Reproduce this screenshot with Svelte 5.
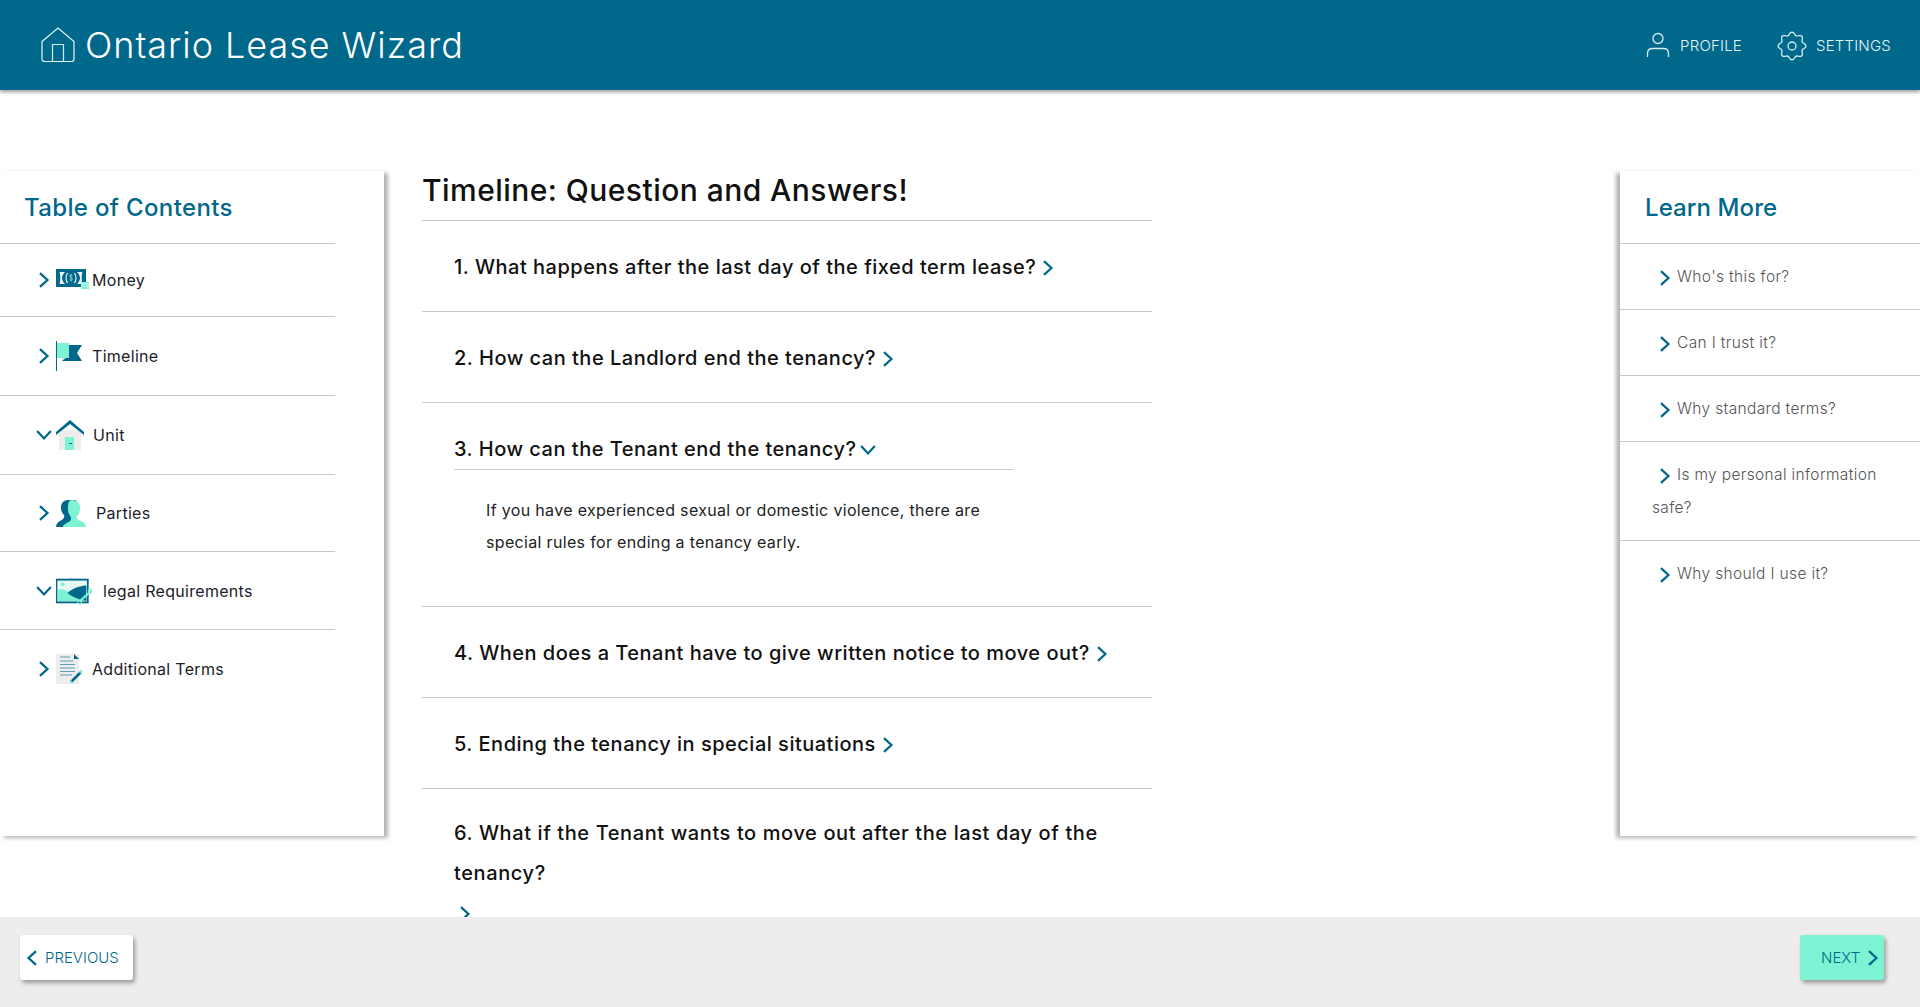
<script>
  const toc = [
    { label: 'Money', icon: 'money', open: false, h: 73, gap: 0 },
    { label: 'Timeline', icon: 'flag', open: false, h: 79, gap: 0 },
    { label: 'Unit', icon: 'home', open: true, h: 79, gap: 1 },
    { label: 'Parties', icon: 'people', open: false, h: 77, gap: 4 },
    { label: 'legal Requirements', icon: 'picture', open: true, h: 78, gap: 11 },
    { label: 'Additional Terms', icon: 'doc', open: false, h: 78, gap: 0 }
  ];

  const questions = [
    { text: '1. What happens after the last day of the fixed term lease?' },
    { text: '2. How can the Landlord end the tenancy?' },
    {
      text: '3. How can the Tenant end the tenancy?',
      open: true,
      answer: 'If you have experienced sexual or domestic violence, there are special rules for ending a tenancy early.'
    },
    { text: '4. When does a Tenant have to give written notice to move out?' },
    { text: '5. Ending the tenancy in special situations' },
    { text: '6. What if the Tenant wants to move out after the last day of the tenancy?', wrap: true }
  ];

  const learn = [
    "Who's this for?",
    'Can I trust it?',
    'Why standard terms?',
    'Is my personal information safe?',
    'Why should I use it?'
  ];

  // wavy 8-lobed outline for the settings gear
  const gearPath = Array.from({ length: 97 }, (_, i) => {
    const a = (i / 96) * Math.PI * 2;
    const r = 12.4 + 1.5 * Math.cos(a * 8);
    const x = (15 + r * Math.sin(a)).toFixed(2);
    const y = (15 - r * Math.cos(a)).toFixed(2);
    return `${i ? 'L' : 'M'}${x} ${y}`;
  }).join(' ');
</script>

{#snippet chevron(dir = 'right', size = 14)}
  <svg class="chev" width={size} height={size} viewBox="0 0 14 14" aria-hidden="true">
    {#if dir === 'right'}
      <path d="M3.500 1 10 7 3.500 13" />
    {:else if dir === 'left'}
      <path d="M10.500 1 4 7 10.500 13" />
    {:else}
      <path d="M1 3.500 7 10 13 3.500" />
    {/if}
  </svg>
{/snippet}

{#snippet tocIcon(name)}
  {#if name === 'money'}
    <svg width="34" height="22" viewBox="0 0 34 22">
      <rect x="0" y="0" width="30" height="18" fill="#00688b" />
      <path d="M3.500 3h5.500c-1.500 1.500-3 4-3 6s1.500 4.500 3 6H3.500c1-2 1-10 0-12zM26.500 3H21c1.500 1.500 3 4 3 6s-1.500 4.500-3 6h5.500c-1-2-1-10 0-12z" fill="#e8f4f4" />
      <path d="M11.500 4c-1.800 3-1.800 7 0 10M18.500 4c1.800 3 1.800 7 0 10" fill="none" stroke="#e8f4f4" stroke-width="1.200" />
      <path d="M16.500 6.500c-1-1-3-.6-3 .7 0 1.600 3 1 3 2.700 0 1.300-2 1.600-3 .6M15 4.800v8" fill="none" stroke="#9fd4d8" stroke-width=".8" />
      <rect x="25" y="13" width="8" height="7" fill="#7df3d3" />
      <path d="M25 15h8M25 17.500h8" stroke="#d8f8ee" stroke-width="1" />
    </svg>
  {:else if name === 'flag'}
    <svg width="28" height="30" viewBox="0 0 28 30">
      <rect x="0" y="0" width="1" height="30" fill="#00688b" />
      <rect x="6" y="15" width="6" height="5" fill="#dfe5e8" />
      <path d="M7 4h19l-5 8 5 8H6l5-4h1z" fill="#00688b" />
      <rect x="1" y="2" width="12" height="15" fill="#7df3d3" />
    </svg>
  {:else if name === 'home'}
    <svg width="28" height="30" viewBox="0 0 28 30">
      <rect x="3" y="10" width="22" height="20" fill="#ededed" />
      <path d="M0 12 14 0l14 12v3L14 4 0 15z" fill="#00688b" />
      <rect x="9" y="17" width="9" height="13" fill="#7df3d3" />
      <rect x="13" y="23" width="3" height="1" fill="#00688b" />
    </svg>
  {:else if name === 'people'}
    <svg width="30" height="27" viewBox="0 0 30 27">
      <path d="M12 0c-4 0-7 3-7 7 0 4 1 6 3 8 1 3-1 4-4 6-2 1-4 3-4 6h20V0z" fill="#00688b" />
      <path d="M16 0c4 0 8 2 8 8 0 4-1 6-3 8-1 3 1 4 4 5 3 1 5 3 5 6H7c0-3 5-4 7-6 2-2 1-4-1-7-1-2-1-4-1-7 0-4 1-7 4-7z" fill="#7df3d3" />
    </svg>
  {:else if name === 'picture'}
    <svg width="38" height="30" viewBox="0 0 38 30">
      <path d="M14 3l2-2 2 2" fill="none" stroke="#9fd4d8" stroke-width=".8" />
      <rect x=".5" y="3" width="33" height="24" fill="#fff" stroke="#00688b" stroke-width="2" />
      <rect x="2" y="4.500" width="30" height="21" fill="#e4f9f3" />
      <path d="M2 14c5-2 9 0 12 3 3 3 8 6 18 8.500H2z" fill="#7df3d3" />
      <path d="M12 17c6-5 13-7 20-8v16.500C24 24 17 21 12 17z" fill="#00688b" />
      <circle cx="7" cy="8" r="2" fill="#7df3d3" />
      <path d="M37 15 25 26" stroke="#7df3d3" stroke-width="2.500" />
      <circle cx="25" cy="27" r="2" fill="none" stroke="#7df3d3" stroke-width="1.200" />
      <circle cx="36" cy="15" r="2" fill="none" stroke="#7df3d3" stroke-width="1.200" />
    </svg>
  {:else}
    <svg width="27" height="30" viewBox="0 0 27 30">
      <rect x="0" y="0" width="23" height="30" fill="#ededed" />
      <path d="M18 0l5 5h-5z" fill="#00688b" />
      <path d="M4 3h10M4 7h13M4 10.500h15M4 14h15M4 17.500h15M4 21h12" stroke="#5d9fb5" stroke-width="1" />
      <path d="M15 28l10-10" stroke="#00688b" stroke-width="2.500" />
      <path d="M24 19l2-3" stroke="#7df3d3" stroke-width="2" />
      <path d="M14 29l2-2" stroke="#7df3d3" stroke-width="1.500" />
    </svg>
  {/if}
{/snippet}

<div class="page">
  <header class="topbar">
    <div class="brand">
      <svg class="brand__icon" width="34" height="36" viewBox="0 0 34 36" fill="none" stroke="#cfeef0" stroke-width="1.200">
        <path d="M1 14.500 17 1l16 13.500V32a2.500 2.500 0 0 1-2.500 2.500h-27A2.500 2.500 0 0 1 1 32z" stroke="#e6f6f6" />
        <path d="M11.500 34V17.500h11V34" />
      </svg>
      <h1>Ontario Lease Wizard</h1>
    </div>
    <nav class="topnav">
      <span class="topnav__item">
        <svg width="24" height="26" viewBox="0 0 24 26" fill="none" stroke="#d5eef1" stroke-width="1.300">
          <circle cx="12" cy="6.500" r="5" />
          <path d="M1.500 25v-3.500c0-3 2-5 5-5h11c3 0 5 2 5 5V25" />
        </svg>
        PROFILE
      </span>
      <span class="topnav__item">
        <svg class="gear" width="30" height="30" viewBox="0 0 30 30" fill="none" stroke="#d5eef1" stroke-width="1.300">
          <circle cx="15" cy="15" r="4" />
          <path d={gearPath} />
        </svg>
        SETTINGS
      </span>
    </nav>
  </header>

  <div class="content">
    <aside class="panel panel--left">
      <h2 class="panel__title">Table of Contents</h2>
      <ul class="toc">
        {#each toc as item}
          <li class="toc__row" style="height: {item.h}px">
            <span class="toc__arrow">{@render chevron(item.open ? 'down' : 'right', 16)}</span>
            <span class="toc__icon">{@render tocIcon(item.icon)}</span>
            <span class="toc__label" style="margin-left: {item.gap}px">{item.label}</span>
          </li>
        {/each}
      </ul>
    </aside>

    <main class="main">
      <h2 class="main__title">Timeline: Question and Answers!</h2>
      {#each questions as q}
        <section class="qa">
          <div class="qa__question" class:qa__question--open={q.open} class:qa__question--wrap={q.wrap}>
            {q.text}
            {#if q.wrap}<br />{/if}
            <span class="qa__chev">{@render chevron(q.open ? 'down' : 'right', 16)}</span>
          </div>
          {#if q.answer}
            <p class="qa__answer">{q.answer}</p>
          {/if}
        </section>
      {/each}
    </main>

    <aside class="panel panel--right">
      <h2 class="panel__title">Learn More</h2>
      <ul class="learn">
        {#each learn as item}
          <li class="learn__row">
            <span class="learn__chev">{@render chevron('right', 16)}</span>{item}
          </li>
        {/each}
      </ul>
    </aside>
  </div>

  <footer class="footer">
    <button class="btn btn--prev">{@render chevron('left', 16)}PREVIOUS</button>
    <button class="btn btn--next">NEXT{@render chevron('right', 16)}</button>
  </footer>
</div>

<style>
  :global(body) {
    margin: 0;
    background: #fff;
    font-family: Inter, "Liberation Sans", sans-serif;
  }

  .chev {
    fill: none;
    stroke: #00688b;
    stroke-width: 2;
    display: inline-block;
    vertical-align: middle;
  }

  .page {
    height: 1007px;
    display: flex;
    flex-direction: column;
    overflow: hidden;
  }

  .topbar {
    flex: 0 0 90px;
    background: #00688b;
    box-shadow: 0 2px 4px rgba(0, 0, 0, 0.4);
    color: #fff;
    display: flex;
    align-items: center;
    justify-content: space-between;
    padding: 0 29px 0 41px;
    position: relative;
    z-index: 2;
  }

  .brand {
    display: flex;
    align-items: center;
    gap: 10px;
  }

  .brand h1 {
    margin: 0;
    font-size: 36px;
    font-weight: 300;
    letter-spacing: 0.95px;
  }

  .topnav {
    display: flex;
    align-items: center;
    gap: 35px;
  }

  .topnav__item {
    display: flex;
    align-items: center;
    gap: 10px;
    font-size: 15px;
    font-weight: 300;
    letter-spacing: 0.2px;
    color: #e6f6f6;
  }

  .gear {
    margin: 2px -1px 0 0;
  }

  .content {
    flex: 1;
    min-height: 0;
    display: flex;
    padding-top: 81px;
  }

  .panel {
    height: 665px;
    background: #fff;
    box-shadow: 4px 2px 4px rgba(0, 0, 0, 0.3);
    box-sizing: border-box;
  }

  .panel--left {
    flex: 0 0 384px;
  }

  .panel--right {
    flex: 0 0 300px;
    box-shadow: -4px 2px 4px rgba(0, 0, 0, 0.3);
  }

  .panel__title {
    margin: 0;
    height: 72px;
    padding-left: 24px;
    font-size: 24px;
    font-weight: 500;
    letter-spacing: 0.35px;
    line-height: 74px;
    color: #00688b;
    border-bottom: 1px solid #c8c8c8;
  }

  .panel--left .panel__title {
    margin-right: 49px;
  }

  .panel--right .panel__title {
    padding-left: 25px;
    letter-spacing: 0.1px;
  }

  ul {
    list-style: none;
    margin: 0;
    padding: 0;
  }

  .toc {
    width: 335px;
  }

  .toc__row {
    display: flex;
    align-items: center;
    box-sizing: border-box;
    border-bottom: 1px solid #c8c8c8;
    padding-left: 36px;
    font-size: 16px;
    letter-spacing: 0.3px;
    color: #1c1c2a;
  }

  .toc__row:last-child {
    border-bottom: 0;
  }

  .toc__arrow {
    width: 20px;
    display: flex;
  }

  .toc__icon {
    display: flex;
    width: 36px;
  }

  .main {
    width: 730px;
    margin-left: 38px;
    margin-right: 468px;
    flex: none;
    overflow: hidden;
    height: 827px;
    margin-top: -81px;
    padding-top: 81px;
    box-sizing: border-box;
  }

  .main__title {
    margin: 0;
    height: 49px;
    font-size: 30px;
    font-weight: 500;
    letter-spacing: 0.45px;
    line-height: 38px;
    color: #111;
    border-bottom: 1px solid #c8c8c8;
  }

  .qa {
    border-bottom: 1px solid #c8c8c8;
    padding: 26px 32px 24px;
  }

  .qa:last-child {
    padding-top: 24px;
    border-bottom: 0;
  }

  .qa__question {
    font-size: 20px;
    font-weight: 500;
    letter-spacing: 0.5px;
    line-height: 40px;
    color: #111;
  }

  .qa__question--open {
    width: 559px;
    margin-top: 1px;
    line-height: 39px;
    border-bottom: 1px solid #c8c8c8;
  }

  .qa__question--wrap {
    letter-spacing: 0.6px;
  }

  .qa__chev {
    display: inline-block;
    line-height: 0;
    vertical-align: 1px;
    margin-left: -2px;
  }

  .qa__question--wrap .qa__chev {
    margin-left: 3px;
  }

  .qa__answer {
    margin: 24px 0 24px 32px;
    width: 510px;
    font-size: 16px;
    letter-spacing: 0.33px;
    line-height: 32px;
    color: #222;
  }

  .learn__row {
    border-bottom: 1px solid #c8c8c8;
    padding: 16px 20px 16px 32px;
    font-size: 15.500px;
    font-weight: 300;
    letter-spacing: 0.35px;
    line-height: 33px;
    color: #555;
  }

  .learn__row:last-child {
    border-bottom: 0;
  }

  .learn__chev {
    display: inline-block;
    width: 20px;
    margin-left: 5px;
    line-height: 0;
    vertical-align: 0;
  }

  .footer {
    flex: 0 0 90px;
    background: #ededed;
    display: flex;
    justify-content: space-between;
    align-items: flex-start;
    padding: 18px 36px 0 20px;
    box-sizing: border-box;
    position: relative;
    z-index: 1;
  }

  .btn {
    height: 45px;
    border: 0;
    border-radius: 3px;
    font: inherit;
    font-size: 15px;
    font-weight: 300;
    color: #00688b;
    box-shadow: 2px 3px 4px rgba(0, 0, 0, 0.35);
    display: flex;
    align-items: center;
  }

  .btn--prev {
    width: 113px;
    background: #fff;
    padding: 0 0 0 4px;
    gap: 5px;
  }

  .btn--next {
    width: 84px;
    background: #7df3d3;
    padding: 0 0 0 21px;
    gap: 5px;
  }
</style>
